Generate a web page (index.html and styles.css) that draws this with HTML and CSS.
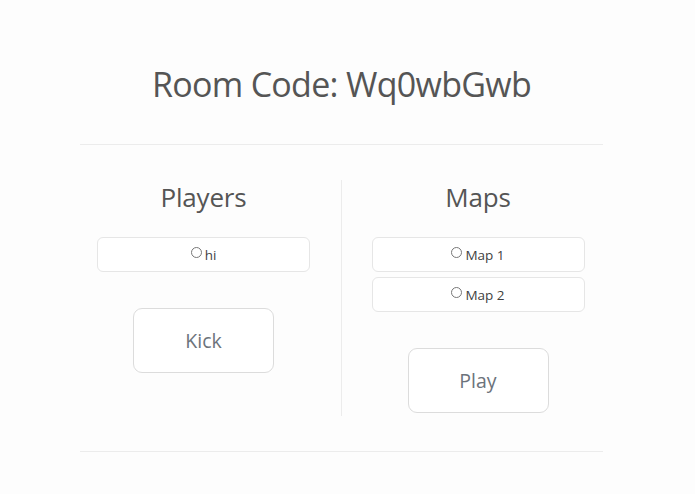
FILE: index.html
```html
<!DOCTYPE html>
<html>
<head>
<meta charset="utf-8">
<link rel="stylesheet" href="styles.css">
</head>
<body>
<div class="page">
  <h1 class="title">Room Code: Wq0wbGwb</h1>
  <hr class="rule">
  <div class="columns">
    <section class="col col-left">
      <h2 class="heading">Players</h2>
      <div class="list">
        <label class="item"><input type="radio" name="player" class="radio"><span>hi</span></label>
      </div>
      <button class="btn">Kick</button>
    </section>
    <section class="col col-right">
      <h2 class="heading">Maps</h2>
      <div class="list">
        <label class="item"><input type="radio" name="map" class="radio"><span>Map 1</span></label>
        <label class="item"><input type="radio" name="map" class="radio"><span>Map 2</span></label>
      </div>
      <button class="btn">Play</button>
    </section>
  </div>
  <hr class="rule rule-bottom">
</div>
</body>
</html>
```
FILE: styles.css
```css
html, body {
  margin: 0;
  padding: 0;
  background: #fdfdfd;
}
body {
  font-family: "Open Sans", "Noto Sans", sans-serif;
  color: #555;
}
.page {
  width: 523px;
  margin-left: 80px;
  padding-top: 60px;
}
.title {
  margin: 0;
  font-size: 34px;
  letter-spacing: -0.7px;
  line-height: 48px;
  font-weight: 400;
  text-align: center;
  color: #555;
}
.rule {
  margin: 36px 0 0;
  border: 0;
  border-top: 1px solid #ececec;
  height: 0;
}
.rule-bottom {
  margin-top: 35px;
}
.columns {
  display: flex;
  margin-top: 35px;
}
.col {
  display: flex;
  flex-direction: column;
  align-items: center;
  width: 261px;
  box-sizing: border-box;
  padding-bottom: 3px;
}
.col-left {
  padding-left: 17px;
  padding-right: 31px;
}
.col-right {
  border-left: 1px solid #ececec;
  padding-left: 30px;
  padding-right: 18px;
}
.heading {
  margin: 0;
  font-size: 26px;
  letter-spacing: -0.2px;
  line-height: 34px;
  font-weight: 400;
  color: #555;
}
.list {
  margin-top: 23px;
  width: 213px;
  display: flex;
  flex-direction: column;
  gap: 5px;
}
.item {
  height: 35px;
  box-sizing: border-box;
  border: 1px solid #e6e6e6;
  border-radius: 6px;
  background: #fff;
  display: flex;
  align-items: center;
  justify-content: center;
  font-size: 13.5px;
  color: #3f3f3f;
}
.radio {
  appearance: none;
  -webkit-appearance: none;
  width: 11px;
  height: 11px;
  margin: 0 3px 5px 0;
  border: 1px solid #777;
  border-radius: 50%;
  background: #fff;
}
.btn {
  margin-top: 36px;
  width: 141px;
  height: 65px;
  border: 1px solid #dcdcdc;
  border-radius: 9px;
  background: #fff;
  font-family: "Open Sans", "Noto Sans", sans-serif;
  font-size: 19.5px;
  color: #6c737b;
}
```
